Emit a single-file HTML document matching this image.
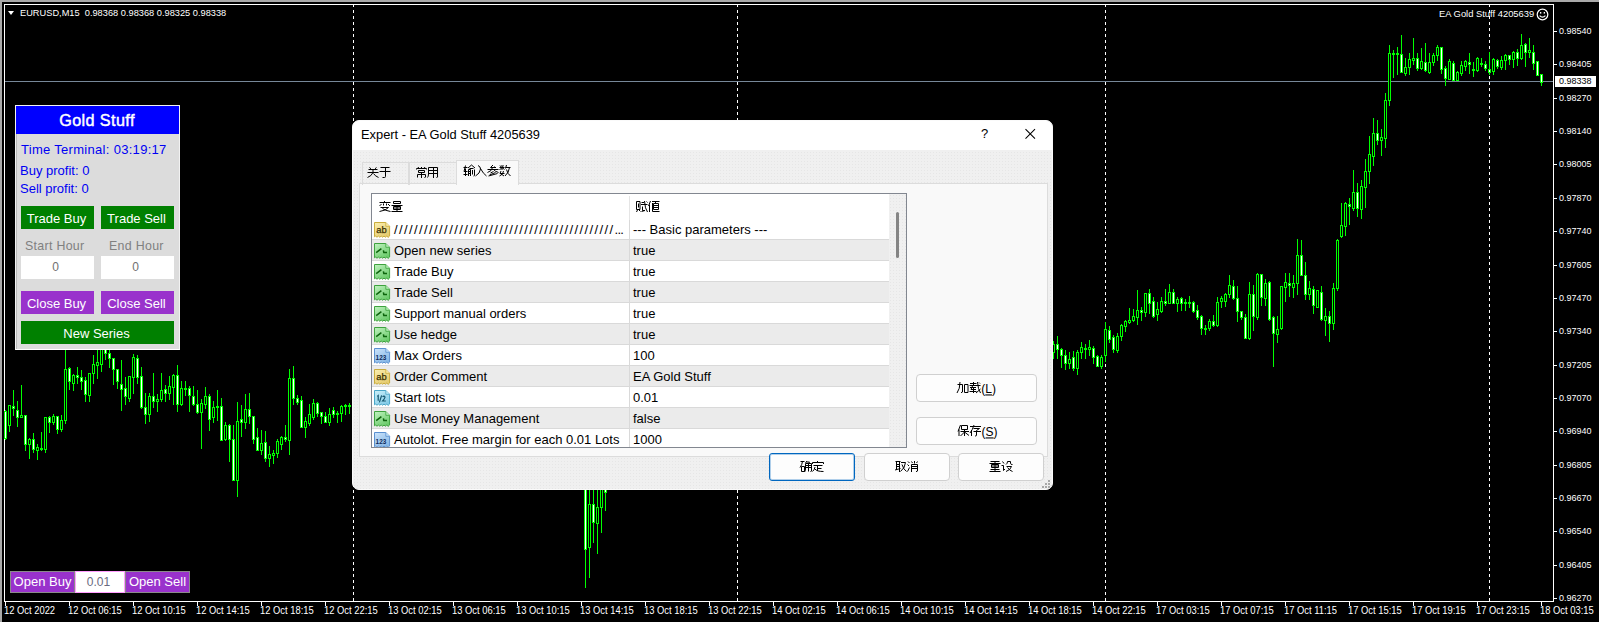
<!DOCTYPE html>
<html><head><meta charset="utf-8"><style>
*{box-sizing:border-box}
html,body{margin:0;padding:0}
body{width:1601px;height:624px;overflow:hidden;position:relative;background:#fff;font-family:"Liberation Sans",sans-serif}
.a{position:absolute}
#gtop{position:absolute;left:0;top:0;width:1599px;height:2px;background:#a9a9a9}
#gleft{position:absolute;left:0;top:0;width:2px;height:622px;background:#a9a9a9}
#blk{position:absolute;left:2px;top:2px;width:1597px;height:620px;background:#000}
#frame{position:absolute;left:4px;top:4px;width:1550px;height:598px;border:1px solid #fff}
#bid{position:absolute;left:5px;top:81px;width:1548px;height:1px;background:#778899}
.dash{position:absolute;top:4px;width:1px;height:597px;background:repeating-linear-gradient(to bottom,#fff 0,#fff 3px,transparent 3px,transparent 6px)}
.tk{position:absolute;background:#fff}
.pl{position:absolute;left:1559px;color:#fff;font-size:9px;line-height:12px;white-space:nowrap;transform:translateY(1px) scaleY(1.1)}
.tl{position:absolute;top:605px;color:#fff;font-size:9.4px;line-height:12px;white-space:nowrap;transform:scaleY(1.08)}
.cd{position:absolute;left:0;top:0}
.ov{position:absolute;left:0;top:0}
.cd rect{fill:#00ff00}
.cd rect.w{fill:#fff}
.cd rect.b{fill:#000}
#hdr{position:absolute;left:20px;top:6.5px;color:#fff;font-size:9.25px;line-height:12px;white-space:pre;transform:scaleY(1.05);transform-origin:0 9px}
#tri{position:absolute;left:8px;top:11px;width:0;height:0;border-left:3.5px solid transparent;border-right:3.5px solid transparent;border-top:4px solid #fff}
#ea{position:absolute;left:1439px;top:7.5px;color:#fff;font-size:9.4px;line-height:12px;white-space:nowrap}
#bidlab{position:absolute;left:1555px;top:76px;width:41px;height:11px;background:#fff;color:#000;font-size:9px;line-height:11px;padding-left:4px}
/* gold panel */
#gp{position:absolute;left:15px;top:105px;width:165px;height:245px;background:#dcdcdc;border:1px solid #f2f2f2;border-bottom-color:#fff}
#gpl{position:absolute;left:0;top:28px;width:1px;height:215px;background:#b9b9b9}
#gph{position:absolute;left:0;top:0;width:163px;height:28px;background:#0000ff;color:#fff;font-size:16.2px;letter-spacing:0.4px;-webkit-text-stroke:0.45px #fff;line-height:28px;text-align:center;padding-right:1px}
.bt{position:absolute;color:#0000f4;font-size:13px;line-height:15px;white-space:nowrap}
.gb{position:absolute;background:#008000;color:#fff;font-size:13px;text-align:center}
.pb{position:absolute;background:#9932cc;color:#fff;font-size:13px;text-align:center}
.pb.a{border:1px solid #8a8a8a}
.inp{position:absolute;background:#fff;color:#606060;font-size:12px;text-align:center}
.hl{position:absolute;color:#808080;font-size:12.4px;letter-spacing:0.3px;white-space:nowrap}
/* dialog */
#dlg{position:absolute;left:352px;top:120px;width:701px;height:370px;border-radius:7px;background-color:#f0f0f0;background-image:radial-gradient(circle at 1.5px 1.5px,#e6e6e6 0,#e6e6e6 0.55px,transparent 0.8px);background-size:3px 3px;border:1px solid #fafafa;overflow:hidden}
#ttl{position:absolute;left:0;top:0;width:699px;height:29px;background:#fff}
#ttxt{position:absolute;left:8px;top:6px;font-size:12.85px;line-height:16px;color:#000;white-space:nowrap}
#tabp{position:absolute;left:6px;top:62px;width:689px;height:274px;background:#f9f9f9;border:1px solid #dcdcdc}
.tab{position:absolute;top:41px;height:23px;background:transparent;border:1px solid #dcdcdc;border-bottom:none}
.tab.sel{top:39px;height:25px;background:#f9f9f9}
#tbl{position:absolute;left:18px;top:72px;width:536px;height:255px;background:#fff;border:1px solid #828790;overflow:hidden}
.row{position:absolute;left:0;width:517px;height:21px;border-bottom:1px solid #d9d9d9;font-size:13px;color:#000}
.row.g{background:#ebebeb}
.ic{position:absolute;left:2px;top:2.5px}
.nm{position:absolute;left:22px;top:3px;line-height:16px;white-space:nowrap}
.vl{position:absolute;left:261px;top:3px;line-height:16px;white-space:nowrap}
#cdiv{position:absolute;left:257px;top:26px;width:1px;height:228px;background:#d9d9d9}
#hdiv{position:absolute;left:257px;top:2px;width:1px;height:24px;background:#e5e5e5}
#sb{position:absolute;left:517px;top:0;width:17px;height:253px;background-color:#f0f0f0;background-image:radial-gradient(circle at 1.5px 1.5px,#e6e6e6 0,#e6e6e6 0.55px,transparent 0.8px);background-size:3px 3px}
#thumb{position:absolute;left:7px;top:18px;width:3px;height:46px;background:#858585;border-radius:1.5px}
.btn{position:absolute;background:#fdfdfd;border:1px solid #d0d0d0;border-radius:4px}
.btn.def{border:1px solid #0067c0;box-shadow:inset 0 0 0 1px rgba(0,103,192,0.3);border-radius:3px}
</style></head><body>
<svg width="0" height="0" style="position:absolute"><defs><linearGradient id="gab" x1="0" y1="0" x2="0.6" y2="1"><stop offset="0" stop-color="#fbefb0"/><stop offset="1" stop-color="#e6cc70"/></linearGradient><linearGradient id="gbool" x1="0" y1="0" x2="0.6" y2="1"><stop offset="0" stop-color="#c0f2c0"/><stop offset="1" stop-color="#6ccc6c"/></linearGradient><linearGradient id="g123" x1="0" y1="0" x2="0.6" y2="1"><stop offset="0" stop-color="#cce4fb"/><stop offset="1" stop-color="#88b8e6"/></linearGradient><linearGradient id="gdbl" x1="0" y1="0" x2="0.6" y2="1"><stop offset="0" stop-color="#ccf0fa"/><stop offset="1" stop-color="#84cce8"/></linearGradient></defs></svg>
<div id="gtop"></div><div id="gleft"></div><div id="blk"></div>
<div id="frame"></div>
<div class="dash" style="left:353px"></div><div class="dash" style="left:737px"></div><div class="dash" style="left:1105px"></div><div class="dash" style="left:1489px"></div>
<div id="bid"></div>
<svg class="cd" width="1601" height="624" viewBox="0 0 1601 624"><rect x="5" y="410" width="1" height="30"/><rect x="4" y="411" width="3" height="28"/><rect class="w" x="5" y="412" width="1" height="26"/><rect x="9" y="405" width="1" height="27"/><rect x="8" y="405" width="3" height="21"/><rect class="b" x="9" y="406" width="1" height="19"/><rect x="13" y="390" width="1" height="26"/><rect x="12" y="406" width="3" height="3"/><rect class="w" x="13" y="407" width="1" height="1"/><rect x="17" y="401" width="1" height="26"/><rect x="16" y="410" width="3" height="8"/><rect class="w" x="17" y="411" width="1" height="6"/><rect x="21" y="385" width="1" height="33"/><rect x="20" y="415" width="3" height="3"/><rect class="b" x="21" y="416" width="1" height="1"/><rect x="25" y="415" width="1" height="36"/><rect x="24" y="415" width="3" height="30"/><rect class="w" x="25" y="416" width="1" height="28"/><rect x="29" y="438" width="1" height="21"/><rect x="28" y="439" width="3" height="6"/><rect class="b" x="29" y="440" width="1" height="4"/><rect x="33" y="433" width="1" height="20"/><rect x="32" y="439" width="3" height="11"/><rect class="w" x="33" y="440" width="1" height="9"/><rect x="37" y="444" width="1" height="16"/><rect x="36" y="447" width="3" height="4"/><rect class="b" x="37" y="448" width="1" height="2"/><rect x="41" y="432" width="1" height="19"/><rect x="40" y="448" width="3" height="2"/><rect x="45" y="417" width="1" height="36"/><rect x="44" y="417" width="3" height="33"/><rect class="b" x="45" y="418" width="1" height="31"/><rect x="49" y="416" width="1" height="17"/><rect x="48" y="417" width="3" height="6"/><rect class="w" x="49" y="418" width="1" height="4"/><rect x="53" y="414" width="1" height="11"/><rect x="52" y="416" width="3" height="7"/><rect class="b" x="53" y="417" width="1" height="5"/><rect x="57" y="416" width="1" height="18"/><rect x="56" y="416" width="3" height="14"/><rect class="w" x="57" y="417" width="1" height="12"/><rect x="61" y="415" width="1" height="17"/><rect x="60" y="420" width="3" height="10"/><rect class="b" x="61" y="421" width="1" height="8"/><rect x="65" y="349" width="1" height="75"/><rect x="64" y="369" width="3" height="52"/><rect class="b" x="65" y="370" width="1" height="50"/><rect x="69" y="367" width="1" height="23"/><rect x="68" y="368" width="3" height="14"/><rect class="w" x="69" y="369" width="1" height="12"/><rect x="73" y="374" width="1" height="17"/><rect x="72" y="375" width="3" height="9"/><rect class="b" x="73" y="376" width="1" height="7"/><rect x="77" y="367" width="1" height="17"/><rect x="76" y="375" width="3" height="3"/><rect class="w" x="77" y="376" width="1" height="1"/><rect x="81" y="370" width="1" height="20"/><rect x="80" y="377" width="3" height="5"/><rect class="w" x="81" y="378" width="1" height="3"/><rect x="85" y="377" width="1" height="25"/><rect x="84" y="380" width="3" height="15"/><rect class="w" x="85" y="381" width="1" height="13"/><rect x="89" y="373" width="1" height="29"/><rect x="88" y="373" width="3" height="23"/><rect class="b" x="89" y="374" width="1" height="21"/><rect x="93" y="355" width="1" height="29"/><rect x="92" y="364" width="3" height="10"/><rect class="b" x="93" y="365" width="1" height="8"/><rect x="97" y="342" width="1" height="37"/><rect x="96" y="362" width="3" height="4"/><rect class="b" x="97" y="363" width="1" height="2"/><rect x="101" y="342" width="1" height="30"/><rect x="100" y="349" width="3" height="16"/><rect class="b" x="101" y="350" width="1" height="14"/><rect x="105" y="342" width="1" height="18"/><rect x="104" y="344" width="3" height="10"/><rect class="w" x="105" y="345" width="1" height="8"/><rect x="109" y="342" width="1" height="26"/><rect x="108" y="353" width="3" height="6"/><rect class="w" x="109" y="354" width="1" height="4"/><rect x="113" y="358" width="1" height="27"/><rect x="112" y="358" width="3" height="12"/><rect class="w" x="113" y="359" width="1" height="10"/><rect x="117" y="369" width="1" height="20"/><rect x="116" y="369" width="3" height="13"/><rect class="w" x="117" y="370" width="1" height="11"/><rect x="121" y="360" width="1" height="51"/><rect x="120" y="384" width="3" height="6"/><rect class="w" x="121" y="385" width="1" height="4"/><rect x="125" y="377" width="1" height="28"/><rect x="124" y="388" width="3" height="9"/><rect class="w" x="125" y="389" width="1" height="7"/><rect x="129" y="376" width="1" height="26"/><rect x="128" y="376" width="3" height="23"/><rect class="b" x="129" y="377" width="1" height="21"/><rect x="133" y="354" width="1" height="40"/><rect x="132" y="357" width="3" height="21"/><rect class="b" x="133" y="358" width="1" height="19"/><rect x="137" y="355" width="1" height="29"/><rect x="136" y="358" width="3" height="20"/><rect class="w" x="137" y="359" width="1" height="18"/><rect x="141" y="367" width="1" height="42"/><rect x="140" y="376" width="3" height="32"/><rect class="w" x="141" y="377" width="1" height="30"/><rect x="145" y="393" width="1" height="31"/><rect x="144" y="407" width="3" height="8"/><rect class="w" x="145" y="408" width="1" height="6"/><rect x="149" y="393" width="1" height="29"/><rect x="148" y="396" width="3" height="19"/><rect class="b" x="149" y="397" width="1" height="17"/><rect x="153" y="373" width="1" height="35"/><rect x="152" y="396" width="3" height="6"/><rect class="w" x="153" y="397" width="1" height="4"/><rect x="157" y="394" width="1" height="18"/><rect x="156" y="399" width="3" height="3"/><rect class="b" x="157" y="400" width="1" height="1"/><rect x="161" y="373" width="1" height="29"/><rect x="160" y="390" width="3" height="10"/><rect class="b" x="161" y="391" width="1" height="8"/><rect x="165" y="385" width="1" height="17"/><rect x="164" y="389" width="3" height="5"/><rect class="w" x="165" y="390" width="1" height="3"/><rect x="169" y="376" width="1" height="24"/><rect x="168" y="386" width="3" height="8"/><rect class="b" x="169" y="387" width="1" height="6"/><rect x="173" y="374" width="1" height="31"/><rect x="172" y="375" width="3" height="13"/><rect class="b" x="173" y="376" width="1" height="11"/><rect x="177" y="365" width="1" height="47"/><rect x="176" y="375" width="3" height="30"/><rect class="w" x="177" y="376" width="1" height="28"/><rect x="181" y="381" width="1" height="25"/><rect x="180" y="388" width="3" height="17"/><rect class="b" x="181" y="389" width="1" height="15"/><rect x="185" y="381" width="1" height="15"/><rect x="184" y="388" width="3" height="2"/><rect x="189" y="386" width="1" height="26"/><rect x="188" y="388" width="3" height="8"/><rect class="w" x="189" y="389" width="1" height="6"/><rect x="193" y="386" width="1" height="20"/><rect x="192" y="396" width="3" height="9"/><rect class="w" x="193" y="397" width="1" height="7"/><rect x="197" y="390" width="1" height="24"/><rect x="196" y="404" width="3" height="9"/><rect class="w" x="197" y="405" width="1" height="7"/><rect x="201" y="399" width="1" height="50"/><rect x="200" y="403" width="3" height="10"/><rect class="b" x="201" y="404" width="1" height="8"/><rect x="205" y="387" width="1" height="22"/><rect x="204" y="396" width="3" height="9"/><rect class="b" x="205" y="397" width="1" height="7"/><rect x="209" y="394" width="1" height="37"/><rect x="208" y="396" width="3" height="24"/><rect class="w" x="209" y="397" width="1" height="22"/><rect x="213" y="401" width="1" height="22"/><rect x="212" y="407" width="3" height="11"/><rect class="b" x="213" y="408" width="1" height="9"/><rect x="217" y="390" width="1" height="31"/><rect x="216" y="406" width="3" height="2"/><rect x="221" y="398" width="1" height="43"/><rect x="220" y="406" width="3" height="35"/><rect class="w" x="221" y="407" width="1" height="33"/><rect x="225" y="422" width="1" height="19"/><rect x="224" y="425" width="3" height="15"/><rect class="b" x="225" y="426" width="1" height="13"/><rect x="229" y="424" width="1" height="38"/><rect x="228" y="425" width="3" height="15"/><rect class="w" x="229" y="426" width="1" height="13"/><rect x="233" y="425" width="1" height="56"/><rect x="232" y="439" width="3" height="42"/><rect class="w" x="233" y="440" width="1" height="40"/><rect x="237" y="402" width="1" height="95"/><rect x="236" y="421" width="3" height="60"/><rect class="b" x="237" y="422" width="1" height="58"/><rect x="241" y="405" width="1" height="32"/><rect x="240" y="419" width="3" height="4"/><rect class="w" x="241" y="420" width="1" height="2"/><rect x="245" y="394" width="1" height="35"/><rect x="244" y="409" width="3" height="14"/><rect class="b" x="245" y="410" width="1" height="12"/><rect x="249" y="393" width="1" height="31"/><rect x="248" y="409" width="3" height="8"/><rect class="w" x="249" y="410" width="1" height="6"/><rect x="253" y="416" width="1" height="28"/><rect x="252" y="416" width="3" height="24"/><rect class="w" x="253" y="417" width="1" height="22"/><rect x="257" y="428" width="1" height="23"/><rect x="256" y="437" width="3" height="14"/><rect class="w" x="257" y="438" width="1" height="12"/><rect x="261" y="430" width="1" height="25"/><rect x="260" y="443" width="3" height="8"/><rect class="b" x="261" y="444" width="1" height="6"/><rect x="265" y="431" width="1" height="31"/><rect x="264" y="442" width="3" height="17"/><rect class="w" x="265" y="443" width="1" height="15"/><rect x="269" y="446" width="1" height="21"/><rect x="268" y="454" width="3" height="5"/><rect class="b" x="269" y="455" width="1" height="3"/><rect x="273" y="450" width="1" height="14"/><rect x="272" y="453" width="3" height="3"/><rect class="b" x="273" y="454" width="1" height="1"/><rect x="277" y="439" width="1" height="19"/><rect x="276" y="441" width="3" height="13"/><rect class="b" x="277" y="442" width="1" height="11"/><rect x="281" y="436" width="1" height="14"/><rect x="280" y="437" width="3" height="8"/><rect class="b" x="281" y="438" width="1" height="6"/><rect x="285" y="425" width="1" height="17"/><rect x="284" y="437" width="3" height="3"/><rect class="w" x="285" y="438" width="1" height="1"/><rect x="289" y="369" width="1" height="86"/><rect x="288" y="378" width="3" height="63"/><rect class="b" x="289" y="379" width="1" height="61"/><rect x="293" y="366" width="1" height="39"/><rect x="292" y="378" width="3" height="21"/><rect class="w" x="293" y="379" width="1" height="19"/><rect x="297" y="395" width="1" height="10"/><rect x="296" y="398" width="3" height="5"/><rect class="w" x="297" y="399" width="1" height="3"/><rect x="301" y="396" width="1" height="32"/><rect x="300" y="400" width="3" height="28"/><rect class="w" x="301" y="401" width="1" height="26"/><rect x="305" y="417" width="1" height="21"/><rect x="304" y="421" width="3" height="7"/><rect class="b" x="305" y="422" width="1" height="5"/><rect x="309" y="404" width="1" height="22"/><rect x="308" y="414" width="3" height="10"/><rect class="b" x="309" y="415" width="1" height="8"/><rect x="313" y="399" width="1" height="21"/><rect x="312" y="403" width="3" height="15"/><rect class="b" x="313" y="404" width="1" height="13"/><rect x="317" y="402" width="1" height="15"/><rect x="316" y="403" width="3" height="11"/><rect class="w" x="317" y="404" width="1" height="9"/><rect x="321" y="412" width="1" height="12"/><rect x="320" y="412" width="3" height="5"/><rect class="w" x="321" y="413" width="1" height="3"/><rect x="325" y="412" width="1" height="11"/><rect x="324" y="416" width="3" height="7"/><rect class="w" x="325" y="417" width="1" height="5"/><rect x="329" y="408" width="1" height="18"/><rect x="328" y="414" width="3" height="9"/><rect class="b" x="329" y="415" width="1" height="7"/><rect x="333" y="407" width="1" height="11"/><rect x="332" y="410" width="3" height="5"/><rect class="w" x="333" y="411" width="1" height="3"/><rect x="337" y="411" width="1" height="12"/><rect x="336" y="413" width="3" height="2"/><rect x="341" y="405" width="1" height="17"/><rect x="340" y="406" width="3" height="8"/><rect class="b" x="341" y="407" width="1" height="6"/><rect x="345" y="404" width="1" height="11"/><rect x="344" y="405" width="3" height="2"/><rect x="349" y="403" width="1" height="11"/><rect x="348" y="405" width="3" height="2"/><rect x="585" y="470" width="1" height="118"/><rect x="584" y="470" width="3" height="80"/><rect class="w" x="585" y="471" width="1" height="78"/><rect x="589" y="470" width="1" height="108"/><rect x="588" y="504" width="3" height="44"/><rect class="b" x="589" y="505" width="1" height="42"/><rect x="593" y="470" width="1" height="73"/><rect x="592" y="504" width="3" height="19"/><rect class="w" x="593" y="505" width="1" height="17"/><rect x="597" y="470" width="1" height="84"/><rect x="596" y="507" width="3" height="17"/><rect class="b" x="597" y="508" width="1" height="15"/><rect x="601" y="470" width="1" height="63"/><rect x="600" y="470" width="3" height="38"/><rect class="b" x="601" y="471" width="1" height="36"/><rect x="605" y="470" width="1" height="41"/><rect x="604" y="470" width="3" height="23"/><rect class="w" x="605" y="471" width="1" height="21"/><rect x="1053" y="341" width="1" height="18"/><rect x="1052" y="344" width="3" height="9"/><rect class="b" x="1053" y="345" width="1" height="7"/><rect x="1057" y="336" width="1" height="23"/><rect x="1056" y="344" width="3" height="6"/><rect class="w" x="1057" y="345" width="1" height="4"/><rect x="1061" y="348" width="1" height="20"/><rect x="1060" y="349" width="3" height="7"/><rect class="w" x="1061" y="350" width="1" height="5"/><rect x="1065" y="350" width="1" height="20"/><rect x="1064" y="355" width="3" height="9"/><rect class="w" x="1065" y="356" width="1" height="7"/><rect x="1069" y="352" width="1" height="17"/><rect x="1068" y="359" width="3" height="5"/><rect class="b" x="1069" y="360" width="1" height="3"/><rect x="1073" y="351" width="1" height="20"/><rect x="1072" y="357" width="3" height="12"/><rect class="w" x="1073" y="358" width="1" height="10"/><rect x="1077" y="350" width="1" height="25"/><rect x="1076" y="352" width="3" height="17"/><rect class="b" x="1077" y="353" width="1" height="15"/><rect x="1081" y="342" width="1" height="17"/><rect x="1080" y="347" width="3" height="6"/><rect class="b" x="1081" y="348" width="1" height="4"/><rect x="1085" y="344" width="1" height="15"/><rect x="1084" y="348" width="3" height="2"/><rect x="1089" y="340" width="1" height="16"/><rect x="1088" y="347" width="3" height="3"/><rect class="b" x="1089" y="348" width="1" height="1"/><rect x="1093" y="346" width="1" height="18"/><rect x="1092" y="348" width="3" height="10"/><rect class="w" x="1093" y="349" width="1" height="8"/><rect x="1097" y="355" width="1" height="12"/><rect x="1096" y="356" width="3" height="11"/><rect class="w" x="1097" y="357" width="1" height="9"/><rect x="1101" y="355" width="1" height="14"/><rect x="1100" y="357" width="3" height="10"/><rect class="b" x="1101" y="358" width="1" height="8"/><rect x="1105" y="322" width="1" height="40"/><rect x="1104" y="329" width="3" height="27"/><rect class="b" x="1105" y="330" width="1" height="25"/><rect x="1109" y="326" width="1" height="17"/><rect x="1108" y="330" width="3" height="10"/><rect class="w" x="1109" y="331" width="1" height="8"/><rect x="1113" y="335" width="1" height="18"/><rect x="1112" y="337" width="3" height="13"/><rect class="w" x="1113" y="338" width="1" height="11"/><rect x="1117" y="333" width="1" height="20"/><rect x="1116" y="336" width="3" height="15"/><rect class="b" x="1117" y="337" width="1" height="13"/><rect x="1121" y="324" width="1" height="17"/><rect x="1120" y="325" width="3" height="12"/><rect class="b" x="1121" y="326" width="1" height="10"/><rect x="1125" y="320" width="1" height="12"/><rect x="1124" y="321" width="3" height="6"/><rect class="b" x="1125" y="322" width="1" height="4"/><rect x="1129" y="308" width="1" height="16"/><rect x="1128" y="320" width="3" height="3"/><rect class="b" x="1129" y="321" width="1" height="1"/><rect x="1133" y="309" width="1" height="13"/><rect x="1132" y="316" width="3" height="5"/><rect class="b" x="1133" y="317" width="1" height="3"/><rect x="1137" y="290" width="1" height="35"/><rect x="1136" y="310" width="3" height="8"/><rect class="b" x="1137" y="311" width="1" height="6"/><rect x="1141" y="307" width="1" height="14"/><rect x="1140" y="310" width="3" height="3"/><rect class="w" x="1141" y="311" width="1" height="1"/><rect x="1145" y="293" width="1" height="24"/><rect x="1144" y="293" width="3" height="20"/><rect class="b" x="1145" y="294" width="1" height="18"/><rect x="1149" y="289" width="1" height="25"/><rect x="1148" y="293" width="3" height="11"/><rect class="w" x="1149" y="294" width="1" height="9"/><rect x="1153" y="297" width="1" height="21"/><rect x="1152" y="301" width="3" height="16"/><rect class="w" x="1153" y="302" width="1" height="14"/><rect x="1157" y="302" width="1" height="19"/><rect x="1156" y="309" width="3" height="6"/><rect class="b" x="1157" y="310" width="1" height="4"/><rect x="1161" y="297" width="1" height="16"/><rect x="1160" y="301" width="3" height="11"/><rect class="b" x="1161" y="302" width="1" height="9"/><rect x="1165" y="289" width="1" height="17"/><rect x="1164" y="301" width="3" height="3"/><rect class="w" x="1165" y="302" width="1" height="1"/><rect x="1169" y="284" width="1" height="20"/><rect x="1168" y="292" width="3" height="12"/><rect class="b" x="1169" y="293" width="1" height="10"/><rect x="1173" y="289" width="1" height="15"/><rect x="1172" y="292" width="3" height="12"/><rect class="w" x="1173" y="293" width="1" height="10"/><rect x="1177" y="297" width="1" height="15"/><rect x="1176" y="299" width="3" height="5"/><rect class="b" x="1177" y="300" width="1" height="3"/><rect x="1181" y="297" width="1" height="14"/><rect x="1180" y="298" width="3" height="6"/><rect class="w" x="1181" y="299" width="1" height="4"/><rect x="1185" y="299" width="1" height="12"/><rect x="1184" y="302" width="3" height="2"/><rect x="1189" y="296" width="1" height="12"/><rect x="1188" y="302" width="3" height="2"/><rect x="1193" y="301" width="1" height="12"/><rect x="1192" y="302" width="3" height="10"/><rect class="w" x="1193" y="303" width="1" height="8"/><rect x="1197" y="305" width="1" height="15"/><rect x="1196" y="310" width="3" height="8"/><rect class="w" x="1197" y="311" width="1" height="6"/><rect x="1201" y="315" width="1" height="20"/><rect x="1200" y="316" width="3" height="13"/><rect class="w" x="1201" y="317" width="1" height="11"/><rect x="1205" y="325" width="1" height="10"/><rect x="1204" y="328" width="3" height="2"/><rect x="1209" y="319" width="1" height="12"/><rect x="1208" y="321" width="3" height="8"/><rect class="b" x="1209" y="322" width="1" height="6"/><rect x="1213" y="315" width="1" height="12"/><rect x="1212" y="321" width="3" height="5"/><rect class="w" x="1213" y="322" width="1" height="3"/><rect x="1217" y="297" width="1" height="30"/><rect x="1216" y="302" width="3" height="24"/><rect class="b" x="1217" y="303" width="1" height="22"/><rect x="1221" y="296" width="1" height="12"/><rect x="1220" y="298" width="3" height="4"/><rect class="b" x="1221" y="299" width="1" height="2"/><rect x="1225" y="293" width="1" height="14"/><rect x="1224" y="294" width="3" height="8"/><rect class="b" x="1225" y="295" width="1" height="6"/><rect x="1229" y="275" width="1" height="23"/><rect x="1228" y="285" width="3" height="10"/><rect class="b" x="1229" y="286" width="1" height="8"/><rect x="1233" y="280" width="1" height="20"/><rect x="1232" y="286" width="3" height="13"/><rect class="w" x="1233" y="287" width="1" height="11"/><rect x="1237" y="286" width="1" height="36"/><rect x="1236" y="298" width="3" height="14"/><rect class="w" x="1237" y="299" width="1" height="12"/><rect x="1241" y="311" width="1" height="9"/><rect x="1240" y="311" width="3" height="7"/><rect class="w" x="1241" y="312" width="1" height="5"/><rect x="1245" y="314" width="1" height="25"/><rect x="1244" y="317" width="3" height="22"/><rect class="w" x="1245" y="318" width="1" height="20"/><rect x="1249" y="282" width="1" height="58"/><rect x="1248" y="294" width="3" height="45"/><rect class="b" x="1249" y="295" width="1" height="43"/><rect x="1253" y="285" width="1" height="46"/><rect x="1252" y="294" width="3" height="23"/><rect class="w" x="1253" y="295" width="1" height="21"/><rect x="1257" y="273" width="1" height="47"/><rect x="1256" y="274" width="3" height="44"/><rect class="b" x="1257" y="275" width="1" height="42"/><rect x="1261" y="274" width="1" height="32"/><rect x="1260" y="274" width="3" height="24"/><rect class="w" x="1261" y="275" width="1" height="22"/><rect x="1265" y="279" width="1" height="27"/><rect x="1264" y="283" width="3" height="16"/><rect class="b" x="1265" y="284" width="1" height="14"/><rect x="1269" y="281" width="1" height="40"/><rect x="1268" y="282" width="3" height="38"/><rect class="w" x="1269" y="283" width="1" height="36"/><rect x="1273" y="316" width="1" height="51"/><rect x="1272" y="317" width="3" height="17"/><rect class="w" x="1273" y="318" width="1" height="15"/><rect x="1277" y="316" width="1" height="27"/><rect x="1276" y="329" width="3" height="6"/><rect class="b" x="1277" y="330" width="1" height="4"/><rect x="1281" y="286" width="1" height="44"/><rect x="1280" y="286" width="3" height="43"/><rect class="b" x="1281" y="287" width="1" height="41"/><rect x="1285" y="273" width="1" height="29"/><rect x="1284" y="282" width="3" height="6"/><rect class="b" x="1285" y="283" width="1" height="4"/><rect x="1289" y="273" width="1" height="24"/><rect x="1288" y="283" width="3" height="3"/><rect class="w" x="1289" y="284" width="1" height="1"/><rect x="1293" y="275" width="1" height="23"/><rect x="1292" y="283" width="3" height="5"/><rect class="b" x="1293" y="284" width="1" height="3"/><rect x="1297" y="239" width="1" height="56"/><rect x="1296" y="255" width="3" height="29"/><rect class="b" x="1297" y="256" width="1" height="27"/><rect x="1301" y="240" width="1" height="36"/><rect x="1300" y="255" width="3" height="21"/><rect class="w" x="1301" y="256" width="1" height="19"/><rect x="1305" y="262" width="1" height="38"/><rect x="1304" y="275" width="3" height="20"/><rect class="w" x="1305" y="276" width="1" height="18"/><rect x="1309" y="281" width="1" height="19"/><rect x="1308" y="288" width="3" height="7"/><rect class="b" x="1309" y="289" width="1" height="5"/><rect x="1313" y="286" width="1" height="28"/><rect x="1312" y="289" width="3" height="17"/><rect class="w" x="1313" y="290" width="1" height="15"/><rect x="1317" y="290" width="1" height="18"/><rect x="1316" y="290" width="3" height="18"/><rect class="b" x="1317" y="291" width="1" height="16"/><rect x="1321" y="286" width="1" height="35"/><rect x="1320" y="292" width="3" height="28"/><rect class="w" x="1321" y="293" width="1" height="26"/><rect x="1325" y="308" width="1" height="28"/><rect x="1324" y="316" width="3" height="5"/><rect class="b" x="1325" y="317" width="1" height="3"/><rect x="1329" y="311" width="1" height="31"/><rect x="1328" y="316" width="3" height="8"/><rect class="w" x="1329" y="317" width="1" height="6"/><rect x="1333" y="283" width="1" height="47"/><rect x="1332" y="288" width="3" height="36"/><rect class="b" x="1333" y="289" width="1" height="34"/><rect x="1337" y="239" width="1" height="52"/><rect x="1336" y="240" width="3" height="49"/><rect class="b" x="1337" y="241" width="1" height="47"/><rect x="1341" y="203" width="1" height="35"/><rect x="1340" y="225" width="3" height="12"/><rect class="b" x="1341" y="226" width="1" height="10"/><rect x="1345" y="202" width="1" height="34"/><rect x="1344" y="203" width="3" height="24"/><rect class="b" x="1345" y="204" width="1" height="22"/><rect x="1349" y="198" width="1" height="27"/><rect x="1348" y="204" width="3" height="3"/><rect class="w" x="1349" y="205" width="1" height="1"/><rect x="1353" y="170" width="1" height="41"/><rect x="1352" y="192" width="3" height="17"/><rect class="b" x="1353" y="193" width="1" height="15"/><rect x="1357" y="183" width="1" height="34"/><rect x="1356" y="192" width="3" height="17"/><rect class="w" x="1357" y="193" width="1" height="15"/><rect x="1361" y="180" width="1" height="39"/><rect x="1360" y="186" width="3" height="24"/><rect class="b" x="1361" y="187" width="1" height="22"/><rect x="1365" y="159" width="1" height="49"/><rect x="1364" y="171" width="3" height="17"/><rect class="b" x="1365" y="172" width="1" height="15"/><rect x="1369" y="136" width="1" height="48"/><rect x="1368" y="154" width="3" height="18"/><rect class="b" x="1369" y="155" width="1" height="16"/><rect x="1373" y="118" width="1" height="48"/><rect x="1372" y="133" width="3" height="24"/><rect class="b" x="1373" y="134" width="1" height="22"/><rect x="1377" y="120" width="1" height="25"/><rect x="1376" y="133" width="3" height="8"/><rect class="w" x="1377" y="134" width="1" height="6"/><rect x="1381" y="129" width="1" height="27"/><rect x="1380" y="137" width="3" height="4"/><rect class="b" x="1381" y="138" width="1" height="2"/><rect x="1385" y="93" width="1" height="55"/><rect x="1384" y="100" width="3" height="39"/><rect class="b" x="1385" y="101" width="1" height="37"/><rect x="1389" y="45" width="1" height="61"/><rect x="1388" y="53" width="3" height="48"/><rect class="b" x="1389" y="54" width="1" height="46"/><rect x="1393" y="50" width="1" height="28"/><rect x="1392" y="53" width="3" height="2"/><rect x="1397" y="47" width="1" height="28"/><rect x="1396" y="53" width="3" height="2"/><rect x="1401" y="35" width="1" height="38"/><rect x="1400" y="54" width="3" height="19"/><rect class="w" x="1401" y="55" width="1" height="17"/><rect x="1405" y="58" width="1" height="18"/><rect x="1404" y="67" width="3" height="7"/><rect class="b" x="1405" y="68" width="1" height="5"/><rect x="1409" y="53" width="1" height="22"/><rect x="1408" y="59" width="3" height="9"/><rect class="b" x="1409" y="60" width="1" height="7"/><rect x="1413" y="38" width="1" height="27"/><rect x="1412" y="58" width="3" height="3"/><rect class="b" x="1413" y="59" width="1" height="1"/><rect x="1417" y="53" width="1" height="18"/><rect x="1416" y="58" width="3" height="11"/><rect class="w" x="1417" y="59" width="1" height="9"/><rect x="1421" y="48" width="1" height="22"/><rect x="1420" y="61" width="3" height="8"/><rect class="b" x="1421" y="62" width="1" height="6"/><rect x="1425" y="43" width="1" height="29"/><rect x="1424" y="62" width="3" height="9"/><rect class="w" x="1425" y="63" width="1" height="7"/><rect x="1429" y="53" width="1" height="21"/><rect x="1428" y="62" width="3" height="11"/><rect class="b" x="1429" y="63" width="1" height="9"/><rect x="1433" y="53" width="1" height="13"/><rect x="1432" y="55" width="3" height="8"/><rect class="b" x="1433" y="56" width="1" height="6"/><rect x="1437" y="45" width="1" height="16"/><rect x="1436" y="47" width="3" height="9"/><rect class="b" x="1437" y="48" width="1" height="7"/><rect x="1441" y="47" width="1" height="27"/><rect x="1440" y="47" width="3" height="23"/><rect class="w" x="1441" y="48" width="1" height="21"/><rect x="1445" y="66" width="1" height="20"/><rect x="1444" y="68" width="3" height="11"/><rect class="w" x="1445" y="69" width="1" height="9"/><rect x="1449" y="59" width="1" height="21"/><rect x="1448" y="61" width="3" height="19"/><rect class="b" x="1449" y="62" width="1" height="17"/><rect x="1453" y="61" width="1" height="20"/><rect x="1452" y="63" width="3" height="18"/><rect class="w" x="1453" y="64" width="1" height="16"/><rect x="1457" y="71" width="1" height="10"/><rect x="1456" y="72" width="3" height="9"/><rect class="b" x="1457" y="73" width="1" height="7"/><rect x="1461" y="61" width="1" height="15"/><rect x="1460" y="65" width="3" height="9"/><rect class="b" x="1461" y="66" width="1" height="7"/><rect x="1465" y="60" width="1" height="11"/><rect x="1464" y="61" width="3" height="6"/><rect class="b" x="1465" y="62" width="1" height="4"/><rect x="1469" y="53" width="1" height="21"/><rect x="1468" y="62" width="3" height="3"/><rect class="w" x="1469" y="63" width="1" height="1"/><rect x="1473" y="62" width="1" height="15"/><rect x="1472" y="69" width="3" height="2"/><rect x="1477" y="57" width="1" height="15"/><rect x="1476" y="58" width="3" height="13"/><rect class="b" x="1477" y="59" width="1" height="11"/><rect x="1481" y="58" width="1" height="9"/><rect x="1480" y="63" width="3" height="2"/><rect x="1485" y="61" width="1" height="10"/><rect x="1484" y="64" width="3" height="5"/><rect class="w" x="1485" y="65" width="1" height="3"/><rect x="1489" y="52" width="1" height="23"/><rect x="1488" y="69" width="3" height="4"/><rect class="w" x="1489" y="70" width="1" height="2"/><rect x="1493" y="58" width="1" height="17"/><rect x="1492" y="59" width="3" height="13"/><rect class="b" x="1493" y="60" width="1" height="11"/><rect x="1497" y="59" width="1" height="10"/><rect x="1496" y="60" width="3" height="7"/><rect class="w" x="1497" y="61" width="1" height="5"/><rect x="1501" y="56" width="1" height="14"/><rect x="1500" y="60" width="3" height="8"/><rect class="b" x="1501" y="61" width="1" height="6"/><rect x="1505" y="54" width="1" height="16"/><rect x="1504" y="55" width="3" height="6"/><rect class="b" x="1505" y="56" width="1" height="4"/><rect x="1509" y="55" width="1" height="10"/><rect x="1508" y="55" width="3" height="5"/><rect class="w" x="1509" y="56" width="1" height="3"/><rect x="1513" y="51" width="1" height="17"/><rect x="1512" y="52" width="3" height="8"/><rect class="b" x="1513" y="53" width="1" height="6"/><rect x="1517" y="49" width="1" height="17"/><rect x="1516" y="52" width="3" height="7"/><rect class="w" x="1517" y="53" width="1" height="5"/><rect x="1521" y="34" width="1" height="26"/><rect x="1520" y="45" width="3" height="14"/><rect class="b" x="1521" y="46" width="1" height="12"/><rect x="1525" y="43" width="1" height="24"/><rect x="1524" y="44" width="3" height="9"/><rect class="w" x="1525" y="45" width="1" height="7"/><rect x="1529" y="38" width="1" height="20"/><rect x="1528" y="50" width="3" height="3"/><rect class="b" x="1529" y="51" width="1" height="1"/><rect x="1533" y="45" width="1" height="25"/><rect x="1532" y="52" width="3" height="12"/><rect class="w" x="1533" y="53" width="1" height="10"/><rect x="1537" y="61" width="1" height="15"/><rect x="1536" y="61" width="3" height="15"/><rect class="w" x="1537" y="62" width="1" height="13"/><rect x="1541" y="74" width="1" height="12"/><rect x="1540" y="74" width="3" height="9"/><rect class="w" x="1541" y="75" width="1" height="7"/></svg>
<div class="tk" style="left:1554px;top:31px;width:3px;height:1px"></div><div class="pl" style="top:24px">0.98540</div><div class="tk" style="left:1554px;top:64px;width:3px;height:1px"></div><div class="pl" style="top:57px">0.98405</div><div class="tk" style="left:1554px;top:98px;width:3px;height:1px"></div><div class="pl" style="top:91px">0.98270</div><div class="tk" style="left:1554px;top:131px;width:3px;height:1px"></div><div class="pl" style="top:124px">0.98140</div><div class="tk" style="left:1554px;top:164px;width:3px;height:1px"></div><div class="pl" style="top:157px">0.98005</div><div class="tk" style="left:1554px;top:198px;width:3px;height:1px"></div><div class="pl" style="top:191px">0.97870</div><div class="tk" style="left:1554px;top:231px;width:3px;height:1px"></div><div class="pl" style="top:224px">0.97740</div><div class="tk" style="left:1554px;top:265px;width:3px;height:1px"></div><div class="pl" style="top:258px">0.97605</div><div class="tk" style="left:1554px;top:298px;width:3px;height:1px"></div><div class="pl" style="top:291px">0.97470</div><div class="tk" style="left:1554px;top:331px;width:3px;height:1px"></div><div class="pl" style="top:324px">0.97340</div><div class="tk" style="left:1554px;top:365px;width:3px;height:1px"></div><div class="pl" style="top:358px">0.97205</div><div class="tk" style="left:1554px;top:398px;width:3px;height:1px"></div><div class="pl" style="top:391px">0.97070</div><div class="tk" style="left:1554px;top:431px;width:3px;height:1px"></div><div class="pl" style="top:424px">0.96940</div><div class="tk" style="left:1554px;top:465px;width:3px;height:1px"></div><div class="pl" style="top:458px">0.96805</div><div class="tk" style="left:1554px;top:498px;width:3px;height:1px"></div><div class="pl" style="top:491px">0.96670</div><div class="tk" style="left:1554px;top:531px;width:3px;height:1px"></div><div class="pl" style="top:524px">0.96540</div><div class="tk" style="left:1554px;top:565px;width:3px;height:1px"></div><div class="pl" style="top:558px">0.96405</div><div class="tk" style="left:1554px;top:598px;width:3px;height:1px"></div><div class="pl" style="top:591px">0.96270</div><div class="tk" style="left:5px;top:602px;width:1px;height:4px"></div><div class="tl" style="left:4px">12 Oct 2022</div><div class="tk" style="left:69px;top:602px;width:1px;height:4px"></div><div class="tl" style="left:68px">12 Oct 06:15</div><div class="tk" style="left:133px;top:602px;width:1px;height:4px"></div><div class="tl" style="left:132px">12 Oct 10:15</div><div class="tk" style="left:197px;top:602px;width:1px;height:4px"></div><div class="tl" style="left:196px">12 Oct 14:15</div><div class="tk" style="left:261px;top:602px;width:1px;height:4px"></div><div class="tl" style="left:260px">12 Oct 18:15</div><div class="tk" style="left:325px;top:602px;width:1px;height:4px"></div><div class="tl" style="left:324px">12 Oct 22:15</div><div class="tk" style="left:389px;top:602px;width:1px;height:4px"></div><div class="tl" style="left:388px">13 Oct 02:15</div><div class="tk" style="left:453px;top:602px;width:1px;height:4px"></div><div class="tl" style="left:452px">13 Oct 06:15</div><div class="tk" style="left:517px;top:602px;width:1px;height:4px"></div><div class="tl" style="left:516px">13 Oct 10:15</div><div class="tk" style="left:581px;top:602px;width:1px;height:4px"></div><div class="tl" style="left:580px">13 Oct 14:15</div><div class="tk" style="left:645px;top:602px;width:1px;height:4px"></div><div class="tl" style="left:644px">13 Oct 18:15</div><div class="tk" style="left:709px;top:602px;width:1px;height:4px"></div><div class="tl" style="left:708px">13 Oct 22:15</div><div class="tk" style="left:773px;top:602px;width:1px;height:4px"></div><div class="tl" style="left:772px">14 Oct 02:15</div><div class="tk" style="left:837px;top:602px;width:1px;height:4px"></div><div class="tl" style="left:836px">14 Oct 06:15</div><div class="tk" style="left:901px;top:602px;width:1px;height:4px"></div><div class="tl" style="left:900px">14 Oct 10:15</div><div class="tk" style="left:965px;top:602px;width:1px;height:4px"></div><div class="tl" style="left:964px">14 Oct 14:15</div><div class="tk" style="left:1029px;top:602px;width:1px;height:4px"></div><div class="tl" style="left:1028px">14 Oct 18:15</div><div class="tk" style="left:1093px;top:602px;width:1px;height:4px"></div><div class="tl" style="left:1092px">14 Oct 22:15</div><div class="tk" style="left:1157px;top:602px;width:1px;height:4px"></div><div class="tl" style="left:1156px">17 Oct 03:15</div><div class="tk" style="left:1221px;top:602px;width:1px;height:4px"></div><div class="tl" style="left:1220px">17 Oct 07:15</div><div class="tk" style="left:1285px;top:602px;width:1px;height:4px"></div><div class="tl" style="left:1284px">17 Oct 11:15</div><div class="tk" style="left:1349px;top:602px;width:1px;height:4px"></div><div class="tl" style="left:1348px">17 Oct 15:15</div><div class="tk" style="left:1413px;top:602px;width:1px;height:4px"></div><div class="tl" style="left:1412px">17 Oct 19:15</div><div class="tk" style="left:1477px;top:602px;width:1px;height:4px"></div><div class="tl" style="left:1476px">17 Oct 23:15</div><div class="tk" style="left:1541px;top:602px;width:1px;height:4px"></div><div class="tl" style="left:1540px">18 Oct 03:15</div>
<div id="bidlab">0.98338</div>
<div id="tri"></div>
<div id="hdr">EURUSD,M15  0.98368 0.98368 0.98325 0.98338</div>
<div id="ea">EA Gold Stuff 4205639</div><svg class="a" style="left:1536px;top:8px" width="13" height="13" viewBox="0 0 13 13"><circle cx="6.5" cy="6.5" r="5.3" fill="none" stroke="#fff" stroke-width="1.25"/><rect x="4" y="4" width="1.3" height="1.6" fill="#fff"/><rect x="7.7" y="4" width="1.3" height="1.6" fill="#fff"/><path d="M3.6 7.6 Q6.5 10.6 9.4 7.6" fill="none" stroke="#fff" stroke-width="1.2"/></svg>

<div id="gp">
 <div id="gph">Gold Stuff</div>
 <div id="gpl"></div>
 <div class="bt" style="left:5px;top:36px;letter-spacing:0.3px">Time Terminal: 03:19:17</div>
 <div class="bt" style="left:4px;top:57px">Buy profit: 0</div>
 <div class="bt" style="left:4px;top:75px">Sell profit: 0</div>
 <div class="gb" style="left:5px;top:100px;width:73px;height:23px;line-height:25.6px;padding-right:2px">Trade Buy</div>
 <div class="gb" style="left:85px;top:100px;width:73px;height:23px;line-height:25.6px;padding-right:2px">Trade Sell</div>
 <div class="hl" style="left:9px;top:133px">Start Hour</div>
 <div class="hl" style="left:93px;top:133px">End Hour</div>
 <div class="inp" style="left:5px;top:150px;width:73px;height:23px;line-height:23px;padding-right:4px;color:#707070">0</div>
 <div class="inp" style="left:85px;top:150px;width:73px;height:23px;line-height:23px;padding-right:4px;color:#707070">0</div>
 <div class="pb" style="left:5px;top:185px;width:73px;height:23px;line-height:25.6px;padding-right:2px">Close Buy</div>
 <div class="pb" style="left:85px;top:185px;width:73px;height:23px;line-height:25.6px;padding-right:2px">Close Sell</div>
 <div class="gb" style="left:5px;top:215px;width:153px;height:23px;line-height:25.6px;padding-right:2px">New Series</div>
</div>

<div class="pb a" style="left:10px;top:571px;width:65px;height:22px;line-height:20px">Open Buy</div>
<div class="inp" style="left:75px;top:571px;width:50px;height:22px;line-height:20px;border:1px solid #ff9cff;padding-right:3px;color:#6a6a80">0.01</div>
<div class="pb a" style="left:125px;top:571px;width:65px;height:22px;line-height:20px">Open Sell</div>

<div id="dlg">
 <div id="ttl"><div id="ttxt">Expert - EA Gold Stuff 4205639</div></div>
 <div id="tabp"></div>
 <div class="tab" style="left:9px;width:47px"></div>
 <div class="tab" style="left:56px;width:48px"></div>
 <div class="tab sel" style="left:103px;width:63px"></div>
 <div id="tbl">
  <div class="row" style="top:25px"><svg class="ic" width="17" height="17" viewBox="0 0 17 17"><path d="M0.5 0.5 H11.8 L15.6 4.3 V14 L14.2 15.4 L12.8 14.1 L11.4 15.2 L10 14.1 L8.6 15.2 L7.2 14.1 L5.8 15.2 L4.4 14.1 L3 15.2 L1.6 14.1 L0.5 14.8 Z" fill="url(#gab)" stroke="#c9ac3c" stroke-width="1"/><path d="M11.8 0.5 V4.3 H15.6" fill="#fbefb0" stroke="#c9ac3c" stroke-width="0.8"/><text x="2.2" y="11.4" font-family="Liberation Sans" font-size="9.4" fill="#3a3000" stroke="#3a3000" stroke-width="0.25">ab</text></svg><span class="nm"><span style="letter-spacing:1.4px">////////////////////////////////////////////</span><span style="letter-spacing:-0.75px">...</span></span><span class="vl">--- Basic parameters ---</span></div><div class="row g" style="top:46px"><svg class="ic" width="17" height="17" viewBox="0 0 17 17"><path d="M0.5 0.5 H11.8 L15.6 4.3 V14 L14.2 15.4 L12.8 14.1 L11.4 15.2 L10 14.1 L8.6 15.2 L7.2 14.1 L5.8 15.2 L4.4 14.1 L3 15.2 L1.6 14.1 L0.5 14.8 Z" fill="url(#gbool)" stroke="#3ea23e" stroke-width="1"/><path d="M11.8 0.5 V4.3 H15.6" fill="#b8f0b8" stroke="#3ea23e" stroke-width="0.8"/><path d="M2.2 9.6 L7.4 5.6 M9.4 7.4 L9.8 9.4 H13" stroke="#0d640d" stroke-width="1.5" fill="none"/></svg><span class="nm">Open new series</span><span class="vl">true</span></div><div class="row" style="top:67px"><svg class="ic" width="17" height="17" viewBox="0 0 17 17"><path d="M0.5 0.5 H11.8 L15.6 4.3 V14 L14.2 15.4 L12.8 14.1 L11.4 15.2 L10 14.1 L8.6 15.2 L7.2 14.1 L5.8 15.2 L4.4 14.1 L3 15.2 L1.6 14.1 L0.5 14.8 Z" fill="url(#gbool)" stroke="#3ea23e" stroke-width="1"/><path d="M11.8 0.5 V4.3 H15.6" fill="#b8f0b8" stroke="#3ea23e" stroke-width="0.8"/><path d="M2.2 9.6 L7.4 5.6 M9.4 7.4 L9.8 9.4 H13" stroke="#0d640d" stroke-width="1.5" fill="none"/></svg><span class="nm">Trade Buy</span><span class="vl">true</span></div><div class="row g" style="top:88px"><svg class="ic" width="17" height="17" viewBox="0 0 17 17"><path d="M0.5 0.5 H11.8 L15.6 4.3 V14 L14.2 15.4 L12.8 14.1 L11.4 15.2 L10 14.1 L8.6 15.2 L7.2 14.1 L5.8 15.2 L4.4 14.1 L3 15.2 L1.6 14.1 L0.5 14.8 Z" fill="url(#gbool)" stroke="#3ea23e" stroke-width="1"/><path d="M11.8 0.5 V4.3 H15.6" fill="#b8f0b8" stroke="#3ea23e" stroke-width="0.8"/><path d="M2.2 9.6 L7.4 5.6 M9.4 7.4 L9.8 9.4 H13" stroke="#0d640d" stroke-width="1.5" fill="none"/></svg><span class="nm">Trade Sell</span><span class="vl">true</span></div><div class="row" style="top:109px"><svg class="ic" width="17" height="17" viewBox="0 0 17 17"><path d="M0.5 0.5 H11.8 L15.6 4.3 V14 L14.2 15.4 L12.8 14.1 L11.4 15.2 L10 14.1 L8.6 15.2 L7.2 14.1 L5.8 15.2 L4.4 14.1 L3 15.2 L1.6 14.1 L0.5 14.8 Z" fill="url(#gbool)" stroke="#3ea23e" stroke-width="1"/><path d="M11.8 0.5 V4.3 H15.6" fill="#b8f0b8" stroke="#3ea23e" stroke-width="0.8"/><path d="M2.2 9.6 L7.4 5.6 M9.4 7.4 L9.8 9.4 H13" stroke="#0d640d" stroke-width="1.5" fill="none"/></svg><span class="nm">Support manual orders</span><span class="vl">true</span></div><div class="row g" style="top:130px"><svg class="ic" width="17" height="17" viewBox="0 0 17 17"><path d="M0.5 0.5 H11.8 L15.6 4.3 V14 L14.2 15.4 L12.8 14.1 L11.4 15.2 L10 14.1 L8.6 15.2 L7.2 14.1 L5.8 15.2 L4.4 14.1 L3 15.2 L1.6 14.1 L0.5 14.8 Z" fill="url(#gbool)" stroke="#3ea23e" stroke-width="1"/><path d="M11.8 0.5 V4.3 H15.6" fill="#b8f0b8" stroke="#3ea23e" stroke-width="0.8"/><path d="M2.2 9.6 L7.4 5.6 M9.4 7.4 L9.8 9.4 H13" stroke="#0d640d" stroke-width="1.5" fill="none"/></svg><span class="nm">Use hedge</span><span class="vl">true</span></div><div class="row" style="top:151px"><svg class="ic" width="17" height="17" viewBox="0 0 17 17"><path d="M0.5 0.5 H11.8 L15.6 4.3 V14 L14.2 15.4 L12.8 14.1 L11.4 15.2 L10 14.1 L8.6 15.2 L7.2 14.1 L5.8 15.2 L4.4 14.1 L3 15.2 L1.6 14.1 L0.5 14.8 Z" fill="url(#g123)" stroke="#5a90d0" stroke-width="1"/><path d="M11.8 0.5 V4.3 H15.6" fill="#c4e0fa" stroke="#5a90d0" stroke-width="0.8"/><text x="1.6" y="12.2" font-family="Liberation Sans" font-weight="bold" font-size="6.4" fill="#0e2a58" transform="scale(1,1)">123</text></svg><span class="nm">Max Orders</span><span class="vl">100</span></div><div class="row g" style="top:172px"><svg class="ic" width="17" height="17" viewBox="0 0 17 17"><path d="M0.5 0.5 H11.8 L15.6 4.3 V14 L14.2 15.4 L12.8 14.1 L11.4 15.2 L10 14.1 L8.6 15.2 L7.2 14.1 L5.8 15.2 L4.4 14.1 L3 15.2 L1.6 14.1 L0.5 14.8 Z" fill="url(#gab)" stroke="#c9ac3c" stroke-width="1"/><path d="M11.8 0.5 V4.3 H15.6" fill="#fbefb0" stroke="#c9ac3c" stroke-width="0.8"/><text x="2.2" y="11.4" font-family="Liberation Sans" font-size="9.4" fill="#3a3000" stroke="#3a3000" stroke-width="0.25">ab</text></svg><span class="nm">Order Comment</span><span class="vl">EA Gold Stuff</span></div><div class="row" style="top:193px"><svg class="ic" width="17" height="17" viewBox="0 0 17 17"><path d="M0.5 0.5 H11.8 L15.6 4.3 V14 L14.2 15.4 L12.8 14.1 L11.4 15.2 L10 14.1 L8.6 15.2 L7.2 14.1 L5.8 15.2 L4.4 14.1 L3 15.2 L1.6 14.1 L0.5 14.8 Z" fill="url(#gdbl)" stroke="#4aa6c8" stroke-width="1"/><path d="M11.8 0.5 V4.3 H15.6" fill="#c4ecf8" stroke="#4aa6c8" stroke-width="0.8"/><path d="M3.2 6.4 L4.2 5.6 V10.8 M7.6 5.4 L5.4 12.4 M8.6 7 Q9.4 5.6 10.6 6.2 Q11.6 7.2 10.2 9 L8.6 11 H11.8" stroke="#15566e" stroke-width="1.2" fill="none"/></svg><span class="nm">Start lots</span><span class="vl">0.01</span></div><div class="row g" style="top:214px"><svg class="ic" width="17" height="17" viewBox="0 0 17 17"><path d="M0.5 0.5 H11.8 L15.6 4.3 V14 L14.2 15.4 L12.8 14.1 L11.4 15.2 L10 14.1 L8.6 15.2 L7.2 14.1 L5.8 15.2 L4.4 14.1 L3 15.2 L1.6 14.1 L0.5 14.8 Z" fill="url(#gbool)" stroke="#3ea23e" stroke-width="1"/><path d="M11.8 0.5 V4.3 H15.6" fill="#b8f0b8" stroke="#3ea23e" stroke-width="0.8"/><path d="M2.2 9.6 L7.4 5.6 M9.4 7.4 L9.8 9.4 H13" stroke="#0d640d" stroke-width="1.5" fill="none"/></svg><span class="nm">Use Money Management</span><span class="vl">false</span></div><div class="row" style="top:235px"><svg class="ic" width="17" height="17" viewBox="0 0 17 17"><path d="M0.5 0.5 H11.8 L15.6 4.3 V14 L14.2 15.4 L12.8 14.1 L11.4 15.2 L10 14.1 L8.6 15.2 L7.2 14.1 L5.8 15.2 L4.4 14.1 L3 15.2 L1.6 14.1 L0.5 14.8 Z" fill="url(#g123)" stroke="#5a90d0" stroke-width="1"/><path d="M11.8 0.5 V4.3 H15.6" fill="#c4e0fa" stroke="#5a90d0" stroke-width="0.8"/><text x="1.6" y="12.2" font-family="Liberation Sans" font-weight="bold" font-size="6.4" fill="#0e2a58" transform="scale(1,1)">123</text></svg><span class="nm">Autolot. Free margin for each 0.01 Lots</span><span class="vl">1000</span></div>
  <div id="hdiv"></div><div id="cdiv"></div>
  <div id="sb"><div id="thumb"></div></div>
 </div>
 <div class="btn" style="left:563px;top:253px;width:121px;height:28px"></div>
 <div class="btn" style="left:563px;top:296px;width:121px;height:28px"></div>
 <div class="btn def" style="left:416px;top:332px;width:86px;height:28px"></div>
 <div class="btn" style="left:511px;top:332px;width:86px;height:28px"></div>
 <div class="btn" style="left:605px;top:332px;width:86px;height:28px"></div>
 <div class="a" style="left:695px;top:359px;width:2px;height:2px;background:#a8a8a8"></div><div class="a" style="left:692px;top:362px;width:2px;height:2px;background:#a8a8a8"></div><div class="a" style="left:695px;top:362px;width:2px;height:2px;background:#a8a8a8"></div><div class="a" style="left:689px;top:365px;width:2px;height:2px;background:#a8a8a8"></div><div class="a" style="left:692px;top:365px;width:2px;height:2px;background:#a8a8a8"></div><div class="a" style="left:695px;top:365px;width:2px;height:2px;background:#a8a8a8"></div>
</div>
<svg class="ov" width="1601" height="624" viewBox="0 0 1601 624"><path transform="translate(367,167)" d="M2.5 0.5 L4 1.8 M9.5 0.5 L8 1.8 M1.5 2.5 H10.5 M0.5 5.5 H11.5 M6 2.5 V5.5 M6 5.5 Q4.5 9 0.5 10.5 M6.5 6.5 Q8 9 11.5 10.5" fill="none" stroke="#000" stroke-width="1.0"/><path transform="translate(379,167)" d="M1.5 0.5 H10.5 M0.5 4.5 H11.5 M6.5 0.5 V9.5 Q6.5 10.5 5.5 10.5 H3.5" fill="none" stroke="#000" stroke-width="1.0"/><path transform="translate(416,167)" d="M2 0 L2.7 1 M5.5 0 V1 M9 0 L8.3 1 M0.5 2.5 V1.5 H10.5 V2.5 M2.5 3.5 H8.5 V5.5 H2.5 Z M1.5 7.5 V10.5 M1.5 7.5 H9.5 V10 Q9.5 10.5 8.5 10.5 M5.5 5.5 V11" fill="none" stroke="#000" stroke-width="1.0"/><path transform="translate(428,167)" d="M0.5 0.5 V7 Q0.5 9.5 -0.5 10.5 M0.5 0.5 H9.5 V10 Q9.5 10.5 8.5 10.5 M0.5 3.5 H9.5 M0.5 6.5 H9.5 M5.5 0.5 V11" fill="none" stroke="#000" stroke-width="1.0"/><path transform="translate(463,165)" d="M0.5 2.5 H4.5 M2.5 0.5 L1 6.5 H4.5 M2.5 3.5 V11 M0.5 9.5 H4.5 M8.5 0 L5 3 M8.5 0 L12 3 M6.5 3.5 H10.5 M5.5 4.5 V11 M5.5 4.5 H7.5 V11 M5.5 6.5 H7.5 M5.5 8.5 H7.5 M9.5 5 V9.5 M11.5 4.5 V10.5 Q11.5 11 10.5 11" fill="none" stroke="#000" stroke-width="1.0"/><path transform="translate(475,165)" d="M3 0.5 Q5.5 1.5 5.5 4 Q5 8.5 0.5 11 M5.5 3.5 Q8 8.5 11.5 11" fill="none" stroke="#000" stroke-width="1.0"/><path transform="translate(487,165)" d="M6 0 L3.5 2.5 H8.5 M7.5 1.5 L9 3 M0.5 4.5 H11.5 M5.5 2.5 Q5 6 0.5 7.5 M6.5 4.5 Q8 6.5 11.5 7.5 M6.5 6.5 L3.5 8 M8.5 7.5 L2.5 10 M10.5 8.5 L1.5 11" fill="none" stroke="#000" stroke-width="1.0"/><path transform="translate(499,165)" d="M1 0.5 L1.8 1.8 M4.5 0.5 L3.7 1.8 M0.5 2.5 H5.5 M3 0 V5 M3 2.5 L0.5 5 M3 2.5 L5.5 4.5 M2 6 L1 8.5 H5.5 M4.5 6 Q4.5 9.5 0.5 11 M1.5 8.5 L5 11 M7.5 0 L6.5 3.5 M6.5 2.5 H11.5 M10.5 2.5 Q10 7.5 6 11 M7.5 4.5 Q8.5 9 11.5 11" fill="none" stroke="#000" stroke-width="1.0"/><path transform="translate(379,201)" d="M5.5 0 V1 M0.5 1.5 H11.5 M4.5 2.5 V4.5 M7.5 2.5 V4.5 M2.5 3 L0.5 5 M9 3 L11 5 M1.5 6.5 H9.5 Q7 9.5 0.5 10.5 M3.5 7.5 Q6 9.5 11.5 10.5" fill="none" stroke="#000" stroke-width="1.0"/><path transform="translate(391,201)" d="M2.5 0.5 H9.5 M2.5 2.5 H9.5 M2.5 0.5 V2.5 M9.5 0.5 V2.5 M0.5 4.5 H11.5 M2.5 5.5 H9.5 V8.5 H2.5 Z M2.5 7 H9.5 M6 5.5 V10.5 M0.5 10.5 H11.5" fill="none" stroke="#000" stroke-width="1.0"/><path transform="translate(636,201)" d="M0.5 0.5 H4 V8.5 H0.5 Z M2.5 2.5 V6.5 M1.5 9 L0.5 11 M3 9 L4.5 10.5 M5.5 1.5 H8 M5 3.5 H11.5 M6.5 5.5 V9.5 H9 M5.5 10.5 L9 9.5 M8.5 0 Q9 8 11.5 11 M10.5 0.5 L11.5 1.5" fill="none" stroke="#000" stroke-width="1.0"/><path transform="translate(648,201)" d="M2.5 0 L0.5 5 M1.5 3.5 V11 M4 0.5 H11.5 M7.5 0 V2.5 M5.5 2.5 H10.5 V8.5 H5.5 Z M5.5 4.5 H10.5 M5.5 6.5 H10.5 M4.5 2 V10.5 H11.5" fill="none" stroke="#000" stroke-width="1.0"/><path transform="translate(957,382)" d="M0.5 2.5 H5.5 V10 Q5.5 10.5 4 10.5 M3 0 Q3 7 0 11 M7.5 2.5 H11 V10.5 H7.5 Z" fill="none" stroke="#000" stroke-width="1.0"/><path transform="translate(969,382)" d="M1 1.5 H7.5 M4.5 0 V3.5 M0.5 3.5 H11.5 M8.5 0 Q9 7.5 11.5 11 M10 0.5 L11 1.5 M1 5.5 H7 M3.5 4 L2 7.5 H7 M4.5 6 V11 M0.5 9.5 H7.5 M7 11 L11.5 7" fill="none" stroke="#000" stroke-width="1.0"/><path transform="translate(958,425)" d="M2.5 0 L0 6.5 M1 4.5 V11 M3.5 0.5 H9.5 V4.5 H3.5 Z M2.5 6.5 H11 M6.5 4.5 V11 M6.5 7 L2.5 11 M6.5 7 L11 10.5" fill="none" stroke="#000" stroke-width="1.0"/><path transform="translate(970,425)" d="M0 1.5 H11 M4 0 Q2.5 5 0 8 M1.5 5 V11 M3.5 3.5 H9.5 L6.5 5.5 V10.5 Q6.5 11 5 11 M3.5 6.5 H11" fill="none" stroke="#000" stroke-width="1.0"/><path transform="translate(800,461)" d="M0.5 0.5 H4.5 M2.5 0.5 Q2 4 0 6.5 M1.5 5.5 H4.5 V10.5 H1.5 Z M7 0 L5.5 2 M6.5 1 H9.5 L8.5 2.5 M5.5 2.5 H11.5 V10 Q11.5 10.5 10.5 10.5 M5.5 2.5 V8 Q5.5 10 4.5 11 M5.5 4.5 H11.5 M5.5 6.5 H11.5 M8.5 2.5 V10.5" fill="none" stroke="#000" stroke-width="1.0"/><path transform="translate(812,461)" d="M5.5 0 V1.5 M0.5 3 V1.5 H11.5 V3 M1.5 4.5 H10.5 M5.5 4.5 V10 M5.5 7.5 H9.5 M3 6 Q2.5 9 0.5 10.5 M3 8 Q4.5 10.5 11.5 10.5" fill="none" stroke="#000" stroke-width="1.0"/><path transform="translate(895,461)" d="M0.5 0.5 H5.5 M1.5 0.5 V9 M4.5 0.5 V11 M1.5 3.5 H4.5 M1.5 5.5 H4.5 M0 9 L5.5 7.5 M6 1.5 H10.5 Q10 7 5.5 10.5 M7 3.5 Q8.5 8.5 11.5 10.5" fill="none" stroke="#000" stroke-width="1.0"/><path transform="translate(907,461)" d="M1 0.5 L2.5 2 M0.5 3.5 L2 5 M0.5 10.5 L2.5 6.5 M7.5 0 V2.5 M4.5 0.5 L5.5 2 M10.5 0.5 L9.5 2 M4.5 3.5 H10.5 V10 Q10.5 10.5 9 10.5 M4.5 3.5 V11 M4.5 5.5 H10.5 M4.5 7.5 H10.5" fill="none" stroke="#000" stroke-width="1.0"/><path transform="translate(989,461)" d="M1.5 0.5 H10.5 M0.5 2.5 H11.5 M2.5 3.5 H9.5 V6.5 H2.5 Z M2.5 5 H9.5 M6 0.5 V10.5 M1.5 8.5 H10.5 M0.5 10.5 H11.5" fill="none" stroke="#000" stroke-width="1.0"/><path transform="translate(1001,461)" d="M1.5 0.5 L3 2.5 M0.5 4.5 H2.5 V9.5 L4 8 M6.5 0.5 Q6.5 2.5 5 3.5 M6.5 0.5 H9.5 V2.5 Q9.5 3.5 11.5 3.5 M5.5 5.5 H10.5 Q9.5 9 5 10.5 M6.5 6.5 Q8.5 9.5 11.5 10.5" fill="none" stroke="#000" stroke-width="1.0"/><path d="M1025.5 129.2 L1035 138.7 M1035 129.2 L1025.5 138.7" stroke="#000" stroke-width="1.05" fill="none"/></svg>
<div class="a" style="left:981.3px;top:380.5px;font-size:12px;line-height:16px;transform:scaleY(1.08)">(<u>L</u>)</div>
<div class="a" style="left:981.6px;top:423.5px;font-size:12px;line-height:16px;transform:scaleY(1.08)">(<u>S</u>)</div>
<div class="a" style="left:981px;top:126px;font-size:13px;line-height:16px">?</div>
</body></html>
